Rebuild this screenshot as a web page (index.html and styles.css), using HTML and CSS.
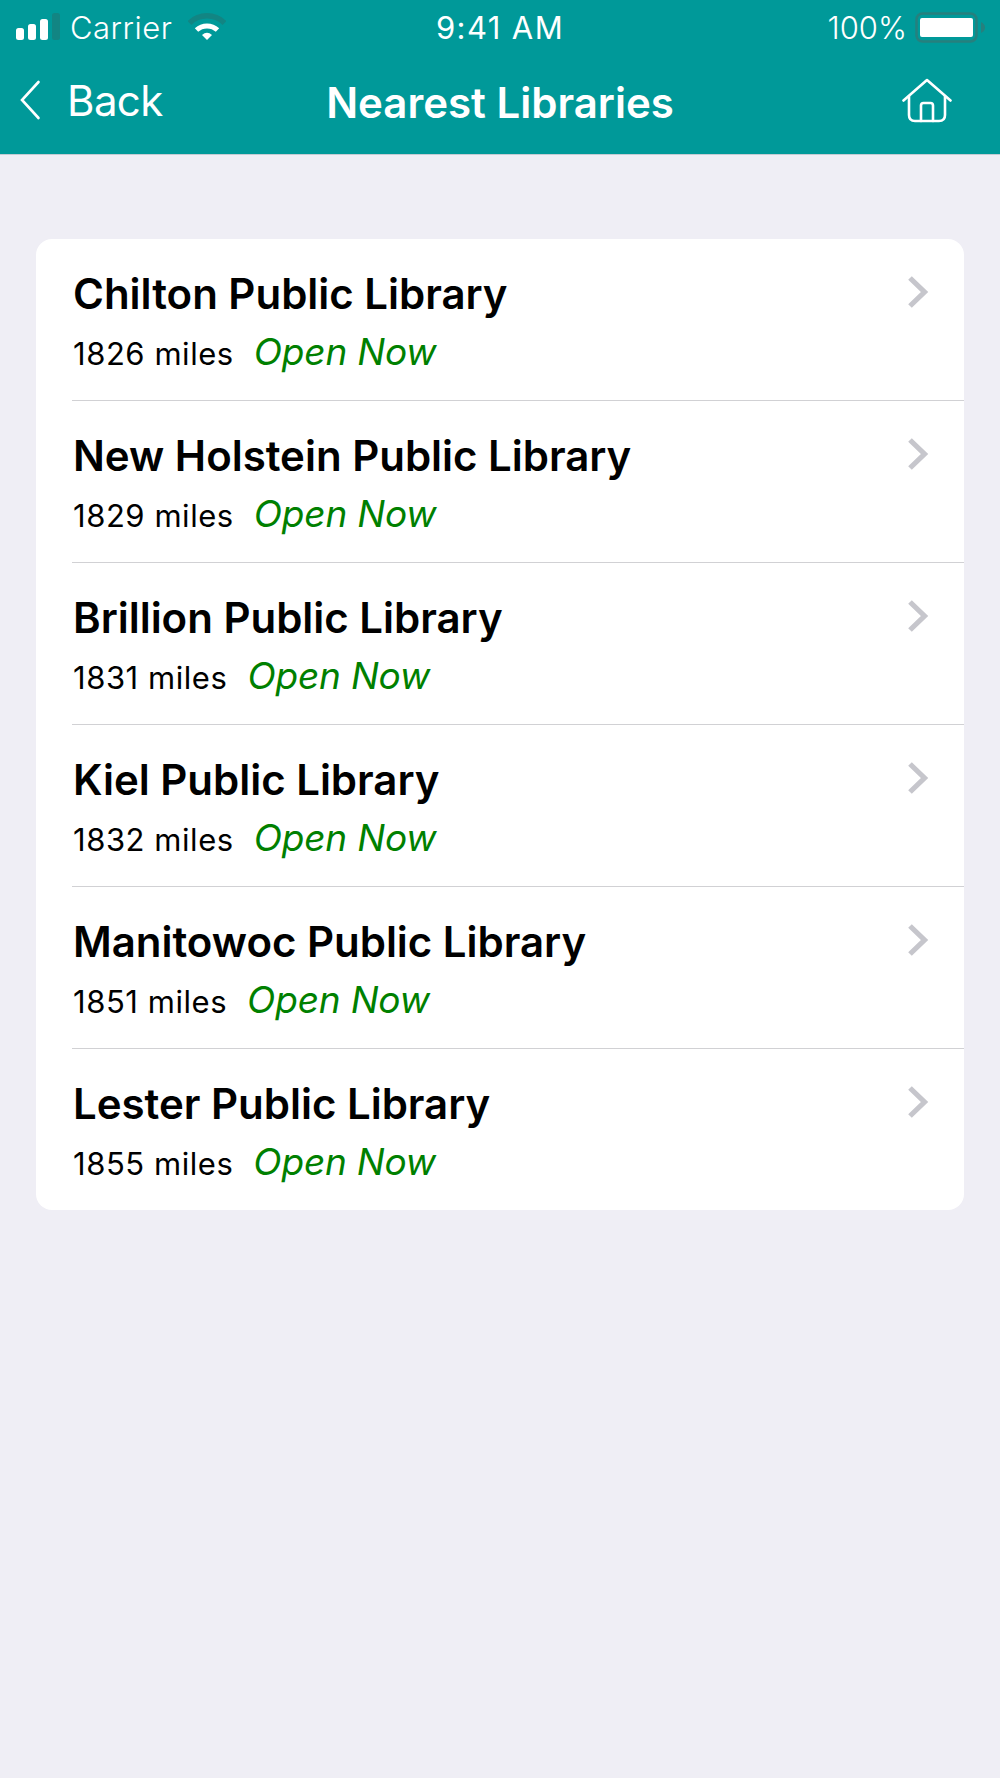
FILE: index.html
```html
<!DOCTYPE html>
<html lang="en">

<head>
    <meta charset="UTF-8">
    <meta name="viewport" content="width=device-width, initial-scale=1.0">
    <title>Nearest Libraries</title>
    <link rel="stylesheet" href="styles.css">
</head>

<body>

    <header class="header">
        <div class="status-bar">
            <div class="status-left">
                <svg class="signal" width="46" height="28" viewBox="0 0 46 28">
                    <rect x="0" y="15" width="8" height="12" rx="2.5" fill="#fff" />
                    <rect x="12" y="11" width="8" height="16" rx="2.5" fill="#fff" />
                    <rect x="24" y="6" width="8" height="21" rx="2.5" fill="#fff" />
                    <rect x="36" y="0" width="8" height="27" rx="2.5" fill="#128583" />
                </svg>
                <span class="carrier">Carrier</span>
                <svg class="wifi" width="38" height="28" viewBox="0 0 38 28">
                    <path d="M1.5 10 A25 25 0 0 1 36.5 10" fill="none" stroke="#128583" stroke-width="5.5" />
                    <path d="M8.5 17 A15.5 15.5 0 0 1 29.5 17" fill="none" stroke="#fff" stroke-width="5" />
                    <path d="M14 22 Q19 17.5 24 22 L19 27 Z" fill="#fff" />
                </svg>
            </div>
            <span class="time">9:41 AM</span>
            <div class="status-right">
                <span class="percent">100%</span>
                <svg class="battery" width="72" height="32" viewBox="0 0 72 32">
                    <rect x="1.5" y="1.5" width="60" height="28" rx="6" fill="none" stroke="#26807e" stroke-width="2.5" />
                    <rect x="5" y="6" width="53" height="19" rx="2" fill="#fff" />
                    <path d="M66 10 Q70 12 70 15.5 Q70 19 66 21 Z" fill="#26807e" />
                </svg>
            </div>
        </div>

        <nav class="nav-bar">
            <a class="back" href="#">
                <svg width="22" height="40" viewBox="0 0 22 40">
                    <path d="M18.5 2 L2 20 L18.5 38" fill="none" stroke="#fff" stroke-width="2.6" stroke-linecap="round" />
                </svg>
                <span class="back-label">Back</span>
            </a>
            <h1>Nearest Libraries</h1>
            <a class="home" href="#" aria-label="Home">
                <svg width="50" height="46" viewBox="0 0 50 46">
                    <g fill="none" stroke="#fff" stroke-width="2.6" stroke-linecap="round" stroke-linejoin="round">
                        <path d="M1.5 22.5 L25 2 L48.5 22.5" />
                        <path d="M7 18.5 V37 Q7 43 13 43 H37 Q43 43 43 37 V18.5" />
                        <path d="M19 43 V27.5 Q19 25 21.5 25 H28.5 Q31 25 31 27.5 V43" />
                    </g>
                </svg>
            </a>
        </nav>
    </header>

    <main class="library-list">
        <a class="library" href="#">
            <div class="info">
                <h2>Chilton Public Library</h2>
                <p><span class="miles">1826 miles</span><em>Open Now</em></p>
            </div>
            <svg class="chevron" width="22" height="34" viewBox="0 0 22 34">
                <path d="M2 3 L16.5 17 L2 31" />
            </svg>
        </a>
        <a class="library" href="#">
            <div class="info">
                <h2>New Holstein Public Library</h2>
                <p><span class="miles">1829 miles</span><em>Open Now</em></p>
            </div>
            <svg class="chevron" width="22" height="34" viewBox="0 0 22 34">
                <path d="M2 3 L16.5 17 L2 31" />
            </svg>
        </a>
        <a class="library" href="#">
            <div class="info">
                <h2>Brillion Public Library</h2>
                <p><span class="miles">1831 miles</span><em>Open Now</em></p>
            </div>
            <svg class="chevron" width="22" height="34" viewBox="0 0 22 34">
                <path d="M2 3 L16.5 17 L2 31" />
            </svg>
        </a>
        <a class="library" href="#">
            <div class="info">
                <h2>Kiel Public Library</h2>
                <p><span class="miles">1832 miles</span><em>Open Now</em></p>
            </div>
            <svg class="chevron" width="22" height="34" viewBox="0 0 22 34">
                <path d="M2 3 L16.5 17 L2 31" />
            </svg>
        </a>
        <a class="library" href="#">
            <div class="info">
                <h2>Manitowoc Public Library</h2>
                <p><span class="miles">1851 miles</span><em>Open Now</em></p>
            </div>
            <svg class="chevron" width="22" height="34" viewBox="0 0 22 34">
                <path d="M2 3 L16.5 17 L2 31" />
            </svg>
        </a>
        <a class="library" href="#">
            <div class="info">
                <h2>Lester Public Library</h2>
                <p><span class="miles">1855 miles</span><em>Open Now</em></p>
            </div>
            <svg class="chevron" width="22" height="34" viewBox="0 0 22 34">
                <path d="M2 3 L16.5 17 L2 31" />
            </svg>
        </a>
    </main>

</body>

</html>
```
FILE: styles.css
```css
* {
    box-sizing: border-box;
}

body {
    margin: 0;
    min-height: 100vh;
    font-family: Inter, "Liberation Sans", sans-serif;
    background-color: #efeef5;
}

h1,
h2,
p {
    margin: 0;
}

a {
    color: inherit;
    text-decoration: none;
}

svg {
    display: block;
    flex-shrink: 0;
}

.header {
    height: 155px;
    background-color: #009999;
    border-bottom: 1px solid #c3cbd3;
    color: white;
}

.status-bar {
    display: grid;
    grid-template-columns: 1fr auto 1fr;
    height: 56px;
    padding: 8px 13px 0 16px;
    font-size: 31px;
    line-height: 40px;
    white-space: nowrap;
}

.status-left,
.status-right {
    display: flex;
    align-items: flex-start;
    font-weight: 300;
}

.status-right {
    justify-content: flex-end;
}

.signal {
    margin-top: 5px;
}

.carrier {
    margin-left: 8px;
    letter-spacing: 0.5px;
}

.wifi {
    margin: 5px 0 0 16px;
}

.battery {
    margin: 4px 0 0 8px;
}

.time {
    padding-right: 3px;
    letter-spacing: 1.4px;
}

.nav-bar {
    display: grid;
    grid-template-columns: 1fr auto 1fr;
    padding: 16px 48px 0 20px;
}

.back {
    display: flex;
    font-size: 42px;
    line-height: 58px;
    letter-spacing: -0.6px;
}

.back svg {
    margin-top: 8px;
}

.back-label {
    margin-left: 25px;
}

h1 {
    padding-left: 28px;
    font-size: 42px;
    font-weight: 600;
    line-height: 61px;
}

.home {
    justify-self: end;
    padding-top: 6px;
}

.library-list {
    margin: 84px 36px 0;
    background-color: white;
    border-radius: 16px;
}

.library {
    display: flex;
    justify-content: space-between;
    height: 162px;
    margin-left: 36px;
    padding: 30px 34px 0 1px;
    border-bottom: 1px solid #d1d1d4;
}

.library:last-child {
    height: 161px;
    border-bottom: none;
}

h2 {
    font-size: 42px;
    font-weight: 600;
    line-height: 50px;
    letter-spacing: -0.02px;
}

.info p {
    display: flex;
    align-items: baseline;
    gap: 20px;
    margin-top: 9px;
    line-height: 47px;
}

.miles {
    font-size: 31px;
    letter-spacing: 0.55px;
}

.info em {
    font-size: 37px;
    letter-spacing: -0.2px;
    color: #008000;
}

.chevron {
    margin-top: 6px;
}

.chevron path {
    fill: none;
    stroke: #c6c6cc;
    stroke-width: 5.2;
}
```
